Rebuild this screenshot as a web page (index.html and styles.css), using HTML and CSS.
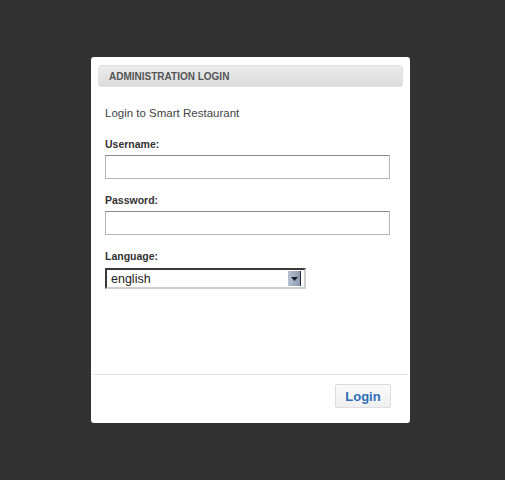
FILE: index.html
```html
<!DOCTYPE html>
<html>
<head>
<meta charset="utf-8">
<link rel="stylesheet" href="styles.css">
</head>
<body>
<div class="panel">
  <div class="panel-head">ADMINISTRATION LOGIN</div>
  <div class="panel-body">
    <p class="intro">Login to Smart Restaurant</p>
    <div class="field">
      <label class="label">Username:</label>
      <div class="input"></div>
    </div>
    <div class="field">
      <label class="label">Password:</label>
      <div class="input"></div>
    </div>
    <div class="field">
      <label class="label lang">Language:</label>
      <div class="select">
        <span class="select-text">english</span>
        <span class="select-btn">
          <svg width="7" height="4" viewBox="0 0 7 4"><path d="M0 0H7L3.5 4Z" fill="#1a1a2a"/></svg>
        </span>
      </div>
    </div>
  </div>
  <div class="panel-foot">
    <button class="btn">Login</button>
  </div>
</div>
</body>
</html>
```
FILE: styles.css
```css
html, body {
  margin: 0;
  padding: 0;
}
body {
  background: #323232;
  width: 505px;
  height: 480px;
  font-family: "Liberation Sans", Arial, sans-serif;
  overflow: hidden;
}
.panel {
  margin: 57px 0 0 91px;
  width: 319px;
  height: 366px;
  background: #fff;
  border-radius: 3px;
  display: flex;
  flex-direction: column;
  box-sizing: border-box;
  padding-top: 8px;
}
.panel-head {
  margin: 0 7px;
  height: 22px;
  line-height: 21px;
  border-radius: 3px;
  background: linear-gradient(#ececec, #dcdcdc);
  border: 1px solid #e2e2e2;
  box-sizing: border-box;
  padding-left: 10px;
  font-size: 10px;
  font-weight: bold;
  color: #555;
}
.panel-body {
  flex: 1;
  padding: 0 20px 0 14px;
}
.intro {
  margin: 19px 0 0;
  font-size: 11.5px;
  line-height: 14px;
  color: #444;
}
.field {
  margin-top: 17px;
}
.field + .field {
  margin-top: 14px;
}
.label {
  display: block;
  font-size: 10.5px;
  font-weight: bold;
  line-height: 14px;
  color: #333;
  margin-bottom: 4px;
}
.label.lang {
  margin-bottom: 5px;
}
.input {
  width: 285px;
  height: 24px;
  box-sizing: border-box;
  border: 1px solid #b5b5b5;
  border-top-color: #8a8a8a;
  background: #fff;
}
.select {
  width: 201px;
  height: 21px;
  box-sizing: border-box;
  border: 2px solid #3a3a3a;
  border-right-color: #d0d0d0;
  border-bottom-color: #d0d0d0;
  background: #fff;
  display: flex;
  align-items: center;
  justify-content: space-between;
  padding: 1px 3px 0 4px;
}
.select-text {
  font-size: 12.5px;
  color: #222;
}
.select-btn {
  width: 12px;
  height: 15px;
  margin-top: -1px;
  background: linear-gradient(90deg, #b7c0d0, #8e9ab0);
  border-right: 1px solid #2a2a3a;
  display: flex;
  align-items: center;
  justify-content: center;
}
.panel-foot {
  border-top: 1px solid #e2e2e2;
  margin: 0 2px;
  height: 49px;
  box-sizing: border-box;
  display: flex;
  justify-content: flex-end;
  align-items: flex-start;
  padding: 9px 17px 0 0;
}
.btn {
  width: 56px;
  height: 24px;
  border: 1px solid #dedede;
  border-radius: 2px;
  background: linear-gradient(#fafafa, #efefef);
  font-family: "Liberation Sans", Arial, sans-serif;
  font-size: 13px;
  font-weight: bold;
  color: #2d6db5;
  padding: 0;
  cursor: pointer;
}
```
